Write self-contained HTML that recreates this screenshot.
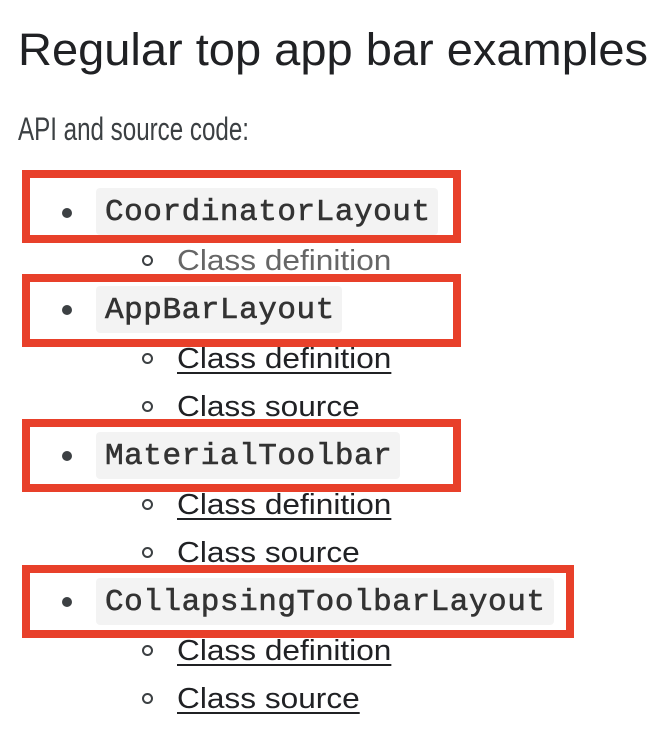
<!DOCTYPE html>
<html><head><meta charset="utf-8"><style>
body{margin:0;width:668px;height:734px;background:#fff;position:relative;overflow:hidden;font-family:"Liberation Sans",sans-serif;color:#202124}
.a{position:absolute;white-space:nowrap;transform-origin:0 0}
.t{font-size:45px;color:#202124;left:18px;top:24px;transform:scaleX(1.045)}
.p{font-size:32px;color:#3c4043;left:18px;top:111px;transform:scaleX(0.755)}
.box{position:absolute;border:8px solid #e8402a;box-sizing:border-box;left:22px;height:73px}
.dot{position:absolute;width:10px;height:10px;border-radius:50%;background:#3c4043;left:62px}
.code{position:absolute;background:#f3f3f3;border-radius:4px;font-family:"Liberation Mono",monospace;font-size:31px;letter-spacing:0.55px;color:#333;left:96px;height:47px;line-height:50px;padding-left:9px;box-sizing:border-box;-webkit-text-stroke:0.6px #333}
.circ{position:absolute;width:7px;height:7px;border:2px solid #3c4043;border-radius:50%;left:142px}
.s{font-size:29px;left:177px;transform:scaleX(1.09);color:#202124;text-decoration:underline;text-decoration-thickness:2px;text-underline-offset:4px}
</style></head><body>
<div class="a t">Regular top app bar examples</div>
<div class="a p">API and source code:</div>

<div class="box" style="top:170px;width:439px"></div>
<div class="dot" style="top:208px"></div>
<div class="code" style="top:188px;width:342px">CoordinatorLayout</div>
<div class="circ" style="top:255px"></div>
<div class="a s" style="top:245px;color:#666;text-decoration:none">Class definition</div>

<div class="box" style="top:274px;width:439px"></div>
<div class="dot" style="top:305px"></div>
<div class="code" style="top:286px;width:246px">AppBarLayout</div>
<div class="circ" style="top:353px"></div>
<div class="a s" style="top:343px">Class definition</div>
<div class="circ" style="top:401px"></div>
<div class="a s" style="top:391px;text-decoration:none">Class source</div>

<div class="box" style="top:419px;width:439px"></div>
<div class="dot" style="top:451px"></div>
<div class="code" style="top:432px;width:304px">MaterialToolbar</div>
<div class="circ" style="top:499px"></div>
<div class="a s" style="top:489px">Class definition</div>
<div class="circ" style="top:547px"></div>
<div class="a s" style="top:537px;text-decoration:none">Class source</div>

<div class="box" style="top:565px;width:552px"></div>
<div class="dot" style="top:597px"></div>
<div class="code" style="top:578px;width:458px">CollapsingToolbarLayout</div>
<div class="circ" style="top:645px"></div>
<div class="a s" style="top:635px">Class definition</div>
<div class="circ" style="top:693px"></div>
<div class="a s" style="top:683px">Class source</div>
</body></html>
